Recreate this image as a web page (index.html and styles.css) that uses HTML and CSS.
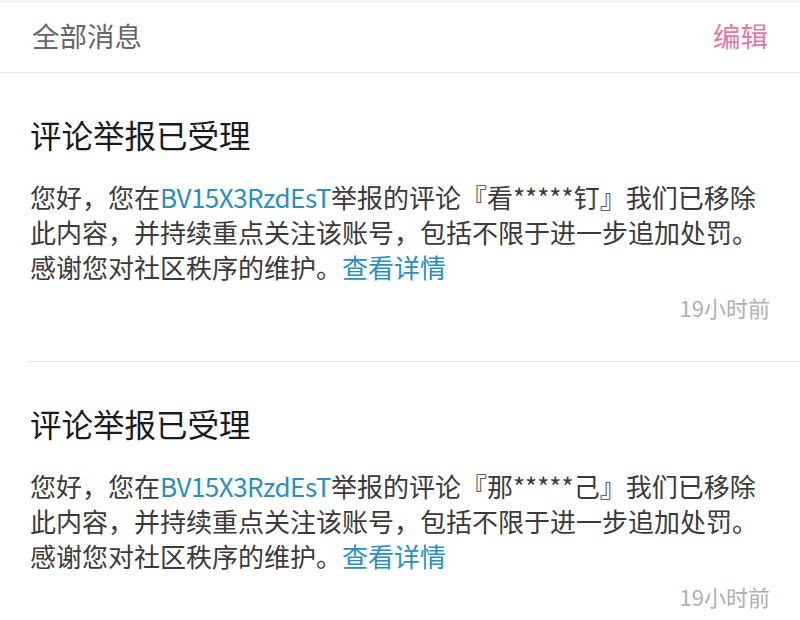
FILE: index.html
```html
<!DOCTYPE html>
<html lang="zh-CN">
<head>
<meta charset="utf-8">
<link rel="stylesheet" href="styles.css">
</head>
<body>
<div class="topstrip"></div>
<header class="header">
  <span class="header-title">全部消息</span>
  <span class="header-edit">编辑</span>
</header>
<main class="list">
  <section class="card">
    <h2 class="card-title">评论举报已受理</h2>
    <p class="card-body">您好，您在<span class="link code">BV15X3RzdEsT</span>举报的评论『看*****钉』我们已移除<br>此内容，并持续重点关注该账号，包括不限于进一步追加处罚。<br>感谢您对社区秩序的维护。<span class="link">查看详情</span></p>
    <div class="card-time">19小时前</div>
  </section>
  <section class="card">
    <h2 class="card-title">评论举报已受理</h2>
    <p class="card-body">您好，您在<span class="link code">BV15X3RzdEsT</span>举报的评论『那*****己』我们已移除<br>此内容，并持续重点关注该账号，包括不限于进一步追加处罚。<br>感谢您对社区秩序的维护。<span class="link">查看详情</span></p>
    <div class="card-time">19小时前</div>
  </section>
</main>
</body>
</html>
```
FILE: styles.css
```css
* { box-sizing: border-box; }
html, body {
  margin: 0;
  padding: 0;
  background: #ffffff;
  font-family: "Noto Sans CJK SC", "Noto Sans", sans-serif;
  overflow: hidden;
}
.topstrip {
  height: 3px;
  background: #f4f4f4;
}
.header {
  height: 70px;
  display: flex;
  align-items: center;
  justify-content: space-between;
  padding: 0 32px 5px 32px;
  border-bottom: 1px solid #ececec;
}
.header-title {
  font-size: 27.5px;
  color: #666666;
}
.header-edit {
  font-size: 27.5px;
  color: #e07a9c;
}
.card {
  margin-left: 28px;
  padding: 41px 30px 39px 2px;
  border-bottom: 1px solid #e8e8e8;
}
.card-title {
  margin: 0;
  font-size: 31.5px;
  line-height: 40px;
  font-weight: 400;
  color: #1a1a1a;
}
.card-body {
  margin: 25px 0 0 0;
  font-size: 26px;
  line-height: 35px;
  color: #3a3a3a;
  white-space: nowrap;
}
.link {
  color: #2a8fbf;
}
.code {
  letter-spacing: -0.5px;
}
.card-time {
  margin-top: 8px;
  text-align: right;
  font-size: 22px;
  line-height: 30px;
  color: #b0b0b0;
}
```
